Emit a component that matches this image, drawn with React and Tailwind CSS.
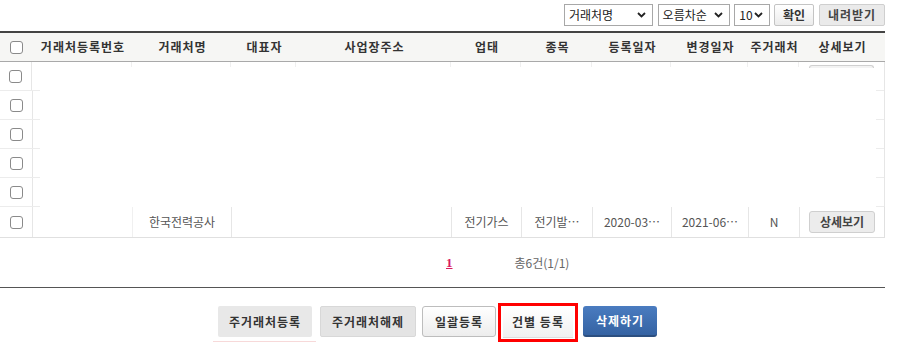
import React from "react";

const F = { fontFamily: '"Noto Sans CJK KR", "Noto Sans", sans-serif' };

const cols = [33, 100, 99, 65, 155, 70, 71, 79, 77, 51, 85];
const heads = ["", "거래처등록번호", "거래처명", "대표자", "사업장주소", "업태", "종목", "등록일자", "변경일자", "주거래처", "상세보기"];

function Chevron() {
  return (
    <svg width="9" height="6" viewBox="0 0 9 6" className="shrink-0">
      <path d="M1 1 L4.5 4.5 L8 1" stroke="#222" strokeWidth="1.8" fill="none" />
    </svg>
  );
}

function Box() {
  return <div className="w-[13px] h-[13px] rounded-[3px] border border-[#8a8a8a] bg-white" />;
}

function Select({ w, label, cls = "" }) {
  return (
    <div className={`h-[22px] ${w} ${cls} border border-[#a8a8a8] bg-white flex items-center justify-between pl-[4px] pr-[6px] text-[12px] text-[#222]`}>
      <span>{label}</span>
      <Chevron />
    </div>
  );
}

export default function App() {
  const lastRow = [
    { t: "", b: "" },
    { t: "", b: "border-r border-[#f0f0f0]" },
    { t: "한국전력공사", b: "border-r border-[#e6e6e6]" },
    { t: "", b: "" },
    { t: "", b: "border-r border-[#e6e6e6]" },
    { t: "전기가스", b: "border-r border-[#e6e6e6]" },
    { t: "전기발…", b: "border-r border-[#e6e6e6]" },
    { t: "2020-03…", b: "border-r border-[#e6e6e6]" },
    { t: "2021-06…", b: "border-r border-[#e6e6e6]" },
    { t: "N", b: "border-r border-[#e6e6e6]" },
  ];
  return (
    <div style={F} className="w-[900px] h-[362px] bg-white overflow-hidden">
      <div className="w-[885px]">
        {/* top controls */}
        <div className="h-[31px] flex items-start pt-[4px] pl-[564px]">
          <Select w="w-[89px]" label="거래처명" />
          <Select w="w-[73px]" label="오름차순" cls="ml-[5px]" />
          <Select w="w-[36px]" label="10" cls="ml-[4px]" />
          <div className="ml-[4px] h-[22px] w-[40px] border border-[#c4c4c4] rounded-[2px] bg-gradient-to-b from-white to-[#ececec] flex items-center justify-center text-[12px] font-bold text-[#333]">확인</div>
          <div className="ml-[5px] h-[22px] w-[66px] shrink-0 border border-[#cfcfcf] rounded-[2px] bg-[#eaeaea] flex items-center justify-center text-[12px] font-bold text-[#444] tracking-[1px]">내려받기</div>
        </div>

        {/* header */}
        <div className="flex h-[31px] border-t-2 border-b border-t-[#444] border-b-[#a9a9a9] bg-[#f6f6f4]">
          {heads.map((h, i) => (
            <div key={i} style={{ width: cols[i] }} className="flex items-center justify-center text-[12px] font-bold text-[#333] tracking-[1px] whitespace-nowrap">
              {i === 0 ? <Box /> : h}
            </div>
          ))}
        </div>

        {/* empty rows */}
        {[0, 1, 2, 3, 4].map((r) => (
          <div key={r} className="relative flex h-[29px] border-r border-[#e6e6e6]">
            <div className="w-[33px] border-r border-[#e6e6e6] flex items-center justify-center">
              <Box />
            </div>
            <div className="absolute left-0 bottom-0 w-[40px] h-[1px] bg-[#ececec]" />
            <div className="absolute right-0 bottom-0 w-[8px] h-[1px] bg-[#ececec]" />
            {r === 0 && (
              <div className="flex">
                {cols.slice(1).map((c, i) => (
                  <div key={i} style={{ width: c }} className={`h-[5px] ${i < 9 ? "border-r border-[#efefef]" : ""}`}>
                    {i === 9 && <div className="ml-[10px] mt-[3px] w-[65px] h-[3px] border-t border-x border-[#d0d0d0] rounded-t-[3px] bg-[#f3f3f3]" />}
                  </div>
                ))}
              </div>
            )}
          </div>
        ))}

        {/* data row */}
        <div className="flex h-[31px] border-b border-r border-[#e0e0e0]">
          <div className="w-[33px] border-r border-[#e6e6e6] flex items-center justify-center">
            <Box />
          </div>
          {lastRow.slice(1).map((c, i) => (
            <div key={i} style={{ width: cols[i + 1] }} className={`${c.b} flex items-center justify-center text-[12px] text-[#555] whitespace-nowrap`}>
              {c.t}
            </div>
          ))}
          <div className="w-[84px] flex items-center justify-center">
            <div className="w-[66px] h-[22px] border border-[#cfcfcf] rounded-[3px] bg-[#ececec] flex items-center justify-center text-[12px] font-bold text-[#444]">상세보기</div>
          </div>
        </div>

        {/* pagination */}
        <div className="h-[49px] flex items-center">
          <div className="w-[446px]" />
          <span style={{ fontFamily: '"Liberation Serif", serif' }} className="text-[13px] font-bold text-[#d81b60] underline">1</span>
          <div className="w-[62px]" />
          <span className="text-[12px] text-[#666]">총6건(1/1)</span>
        </div>
        <div className="h-[1px] bg-[#555]" />

        {/* bottom buttons */}
        <div className="flex items-start pt-[15px] pl-[213px]">
          <div className="flex flex-col w-[103px]">
            <div className="mt-[3px] ml-[5px] w-[94px] h-[31px] bg-[#e8e8e8] rounded-[2px] flex items-center justify-center text-[12px] font-bold text-[#333] tracking-[1px]">주거래처등록</div>
            <div className="mt-[4px] w-[103px] h-[1px] bg-[#f7d9d9]" />
          </div>
          <div className="mt-[3px] ml-[4px] w-[96px] h-[31px] bg-[#e4e4e4] border border-[#d8d8d8] rounded-[2px] flex items-center justify-center text-[12px] font-bold text-[#333] tracking-[1px]">주거래처해제</div>
          <div className="mt-[3px] ml-[6px] w-[74px] h-[31px] border border-[#bdbdbd] rounded-[3px] bg-gradient-to-b from-white to-[#ededed] flex items-center justify-center text-[12px] font-bold text-[#333] tracking-[1px]">일괄등록</div>
          <div className="ml-[2px] w-[80px] h-[39px] border-[3px] border-[#ff0000] flex items-center justify-center">
            <div className="w-[70px] h-[31px] bg-gradient-to-b from-white to-[#f0f0f0] border-b border-[#ddd] flex items-center justify-center text-[12px] font-bold text-[#333] tracking-[1px]">건별 등록</div>
          </div>
          <div className="mt-[3px] ml-[5px] w-[74px] h-[31px] rounded-[3px] bg-gradient-to-b from-[#4a7cc0] to-[#3563a3] border-b-2 border-[#2c4f80] flex items-center justify-center text-[12px] font-bold text-white tracking-[1px]">삭제하기</div>
        </div>
      </div>
    </div>
  );
}
